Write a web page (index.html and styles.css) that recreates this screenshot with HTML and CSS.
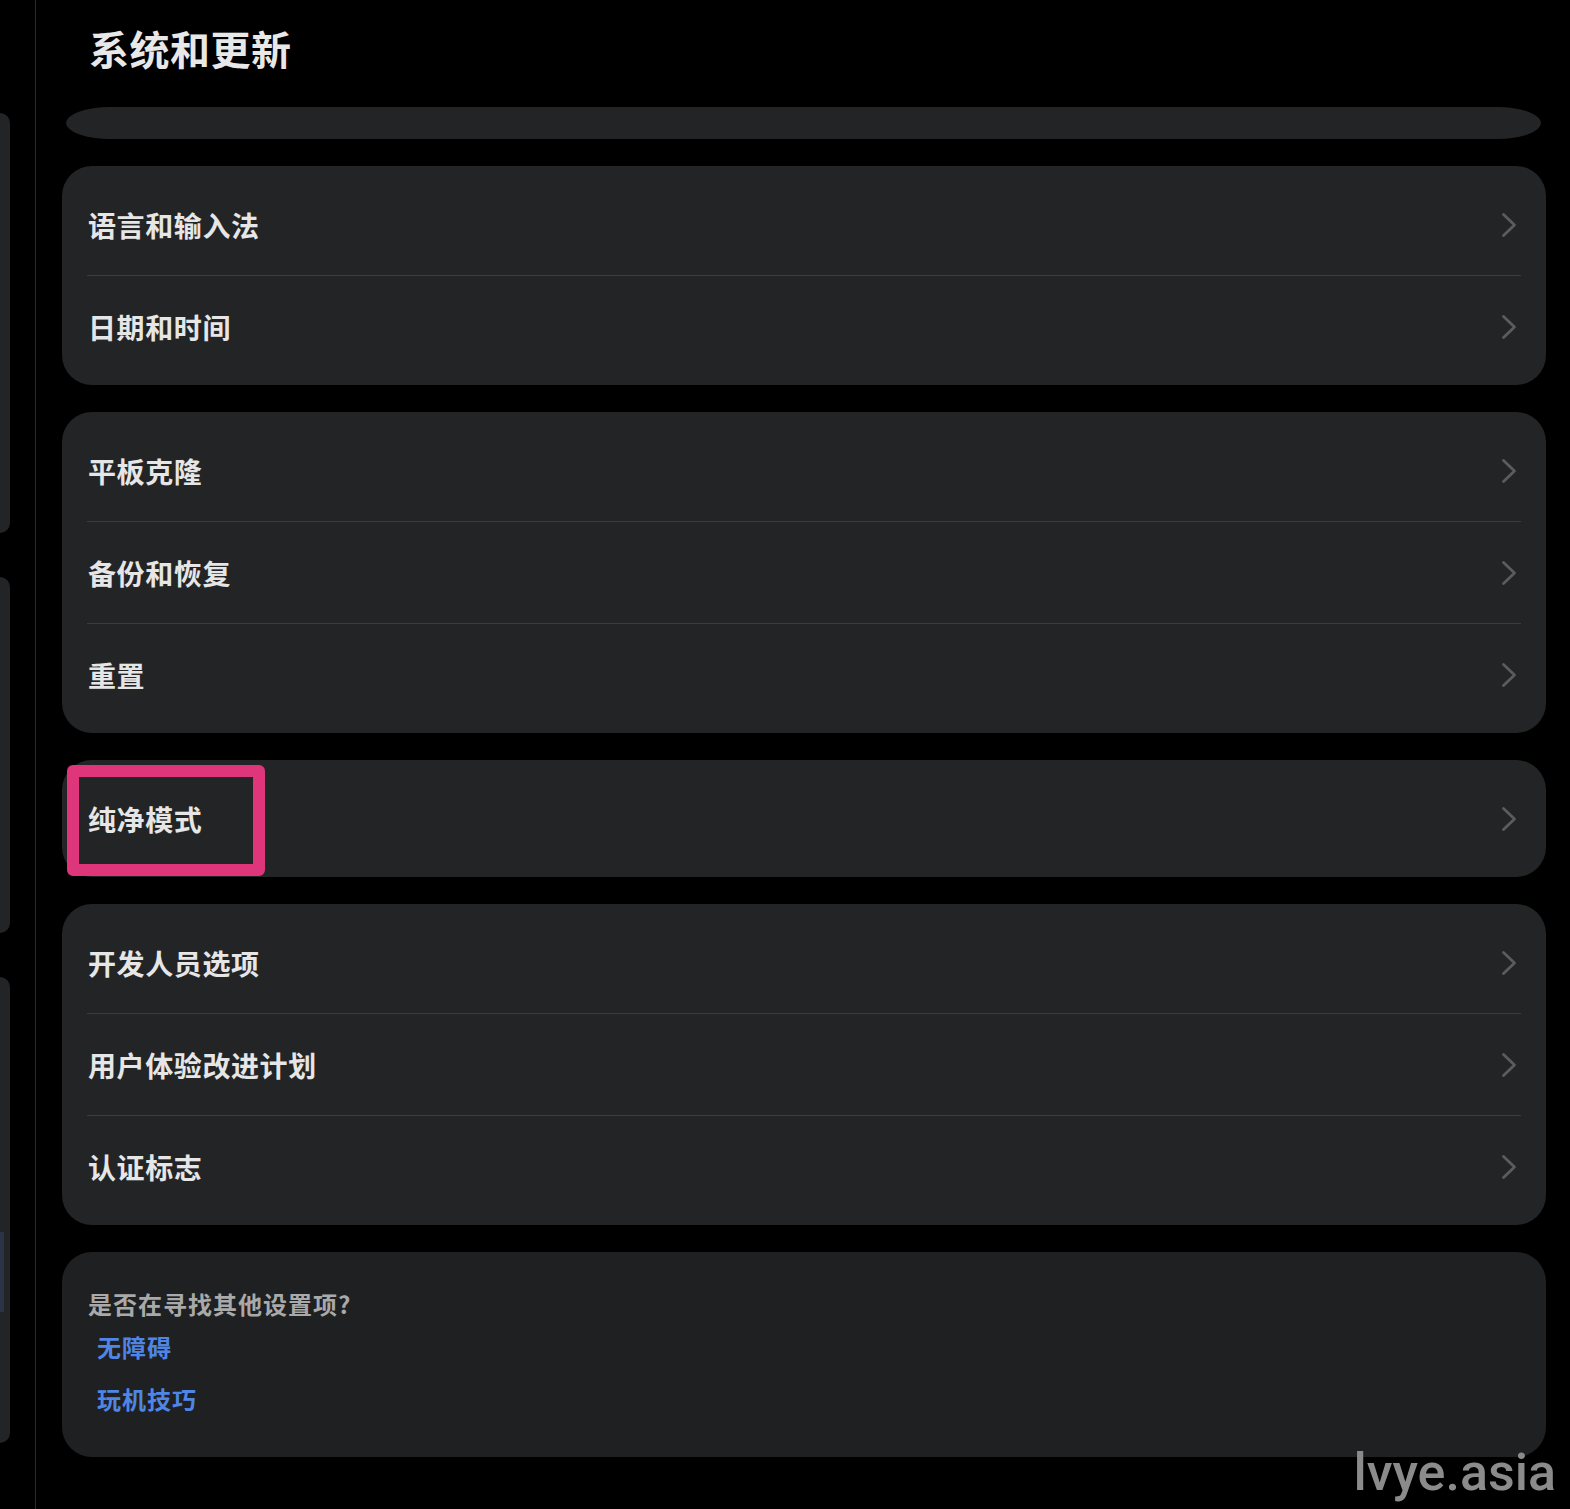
FILE: index.html
```html
<!DOCTYPE html>
<html lang="zh-CN">
<head>
<meta charset="utf-8">
<title>系统和更新</title>
<link rel="stylesheet" href="styles.css">
</head>
<body>
<div class="page">
  <aside class="side">
    <div class="side-card c1"></div>
    <div class="side-card c2"></div>
    <div class="side-card c3"><div class="side-hl"></div></div>
  </aside>
  <main class="main">
    <h1 class="title">系统和更新</h1>
    <div class="pill"></div>
    <div class="cards">
      <section class="card">
        <div class="row"><span class="label">语言和输入法</span><svg class="chev" viewBox="0 0 16 26"><path d="M2.5 2.5 L13.5 13 L2.5 23.5"/></svg></div>
        <div class="divider"></div>
        <div class="row"><span class="label">日期和时间</span><svg class="chev" viewBox="0 0 16 26"><path d="M2.5 2.5 L13.5 13 L2.5 23.5"/></svg></div>
      </section>
      <section class="card">
        <div class="row"><span class="label">平板克隆</span><svg class="chev" viewBox="0 0 16 26"><path d="M2.5 2.5 L13.5 13 L2.5 23.5"/></svg></div>
        <div class="divider"></div>
        <div class="row"><span class="label">备份和恢复</span><svg class="chev" viewBox="0 0 16 26"><path d="M2.5 2.5 L13.5 13 L2.5 23.5"/></svg></div>
        <div class="divider"></div>
        <div class="row"><span class="label">重置</span><svg class="chev" viewBox="0 0 16 26"><path d="M2.5 2.5 L13.5 13 L2.5 23.5"/></svg></div>
      </section>
      <section class="card card-mark">
        <div class="row"><span class="label">纯净模式</span><svg class="chev" viewBox="0 0 16 26"><path d="M2.5 2.5 L13.5 13 L2.5 23.5"/></svg></div>
        <div class="mark"></div>
      </section>
      <section class="card">
        <div class="row"><span class="label">开发人员选项</span><svg class="chev" viewBox="0 0 16 26"><path d="M2.5 2.5 L13.5 13 L2.5 23.5"/></svg></div>
        <div class="divider"></div>
        <div class="row"><span class="label">用户体验改进计划</span><svg class="chev" viewBox="0 0 16 26"><path d="M2.5 2.5 L13.5 13 L2.5 23.5"/></svg></div>
        <div class="divider"></div>
        <div class="row"><span class="label">认证标志</span><svg class="chev" viewBox="0 0 16 26"><path d="M2.5 2.5 L13.5 13 L2.5 23.5"/></svg></div>
      </section>
      <section class="card card-foot">
        <p class="question">是否在寻找其他设置项?</p>
        <a class="link first">无障碍</a>
        <a class="link">玩机技巧</a>
      </section>
    </div>
  </main>
  <div class="watermark">lvye.asia</div>
</div>
</body>
</html>
```

FILE: styles.css
```css
* { box-sizing: border-box; }
html, body { margin: 0; padding: 0; background: #000; }
body {
  font-family: "Noto Sans CJK SC", "Noto Sans", sans-serif;
  color: #e6e6e6;
}
.page {
  position: relative;
  display: flex;
  width: 1570px;
  height: 1509px;
  overflow: hidden;
}
.side {
  width: 36px;
  flex: none;
  border-right: 1px solid #2a2a2b;
  padding-top: 113px;
  display: flex;
  flex-direction: column;
  gap: 44px;
}
.side-card {
  width: 10px;
  background: #232425;
  border-radius: 0 10px 10px 0;
  position: relative;
  overflow: hidden;
}
.c1 { height: 420px; }
.c2 { height: 356px; }
.c3 { height: 466px; }
.side-hl {
  position: absolute;
  left: 0;
  top: 255px;
  width: 4px;
  height: 80px;
  background: #2a3348;
}
.main {
  flex: 1;
  padding: 0 24px 0 26px;
}
.title {
  margin: 24px 0 35px 27px;
  font-size: 40px;
  line-height: 48px;
  font-weight: 700;
  color: #e8e8e8;
  letter-spacing: 0.5px;
}
.pill {
  height: 32px;
  margin: 0 5px 0 4px;
  background: #232425;
  border-radius: 44px / 16px;
}
.cards {
  margin-top: 27px;
  display: flex;
  flex-direction: column;
  gap: 27px;
}
.card {
  background: #232425;
  border-radius: 30px;
  padding: 8px 0;
  position: relative;
}
.row {
  height: 101px;
  display: flex;
  align-items: center;
  justify-content: space-between;
  padding: 0 29px 0 26px;
}
.label {
  font-size: 28px;
  font-weight: 700;
  color: #e6e6e6;
  letter-spacing: 0.6px;
}
.chev {
  width: 16px;
  height: 26px;
  fill: none;
  stroke: #5b5c5d;
  stroke-width: 2.8;
  stroke-linecap: round;
  stroke-linejoin: round;
}
.divider {
  height: 1px;
  background: #3b3c3d;
  margin: 0 25px 0 25px;
}
.mark {
  position: absolute;
  left: 5px;
  top: 5px;
  width: 198px;
  height: 111px;
  border: 12px solid #df367b;
  border-radius: 6px;
}
.card-foot {
  background: #1f2021;
  padding: 38px 0 44px 26px;
  display: flex;
  flex-direction: column;
  align-items: flex-start;
}
.question {
  margin: 0;
  font-size: 24px;
  line-height: 28px;
  color: #a9a9a9;
  font-weight: 700;
  letter-spacing: 1px;
}
.link {
  margin-top: 24px;
  margin-left: 9px;
  font-size: 24px;
  line-height: 28px;
  font-weight: 700;
  color: #4f86e6;
  letter-spacing: 1px;
}
.link.first { margin-top: 15px; }
.watermark {
  position: absolute;
  right: 14px;
  top: 1438px;
  font-family: Roboto, "Noto Sans", sans-serif;
  font-weight: 500;
  font-size: 52px;
  line-height: 70px;
  color: #8b8b8b;
}
```
